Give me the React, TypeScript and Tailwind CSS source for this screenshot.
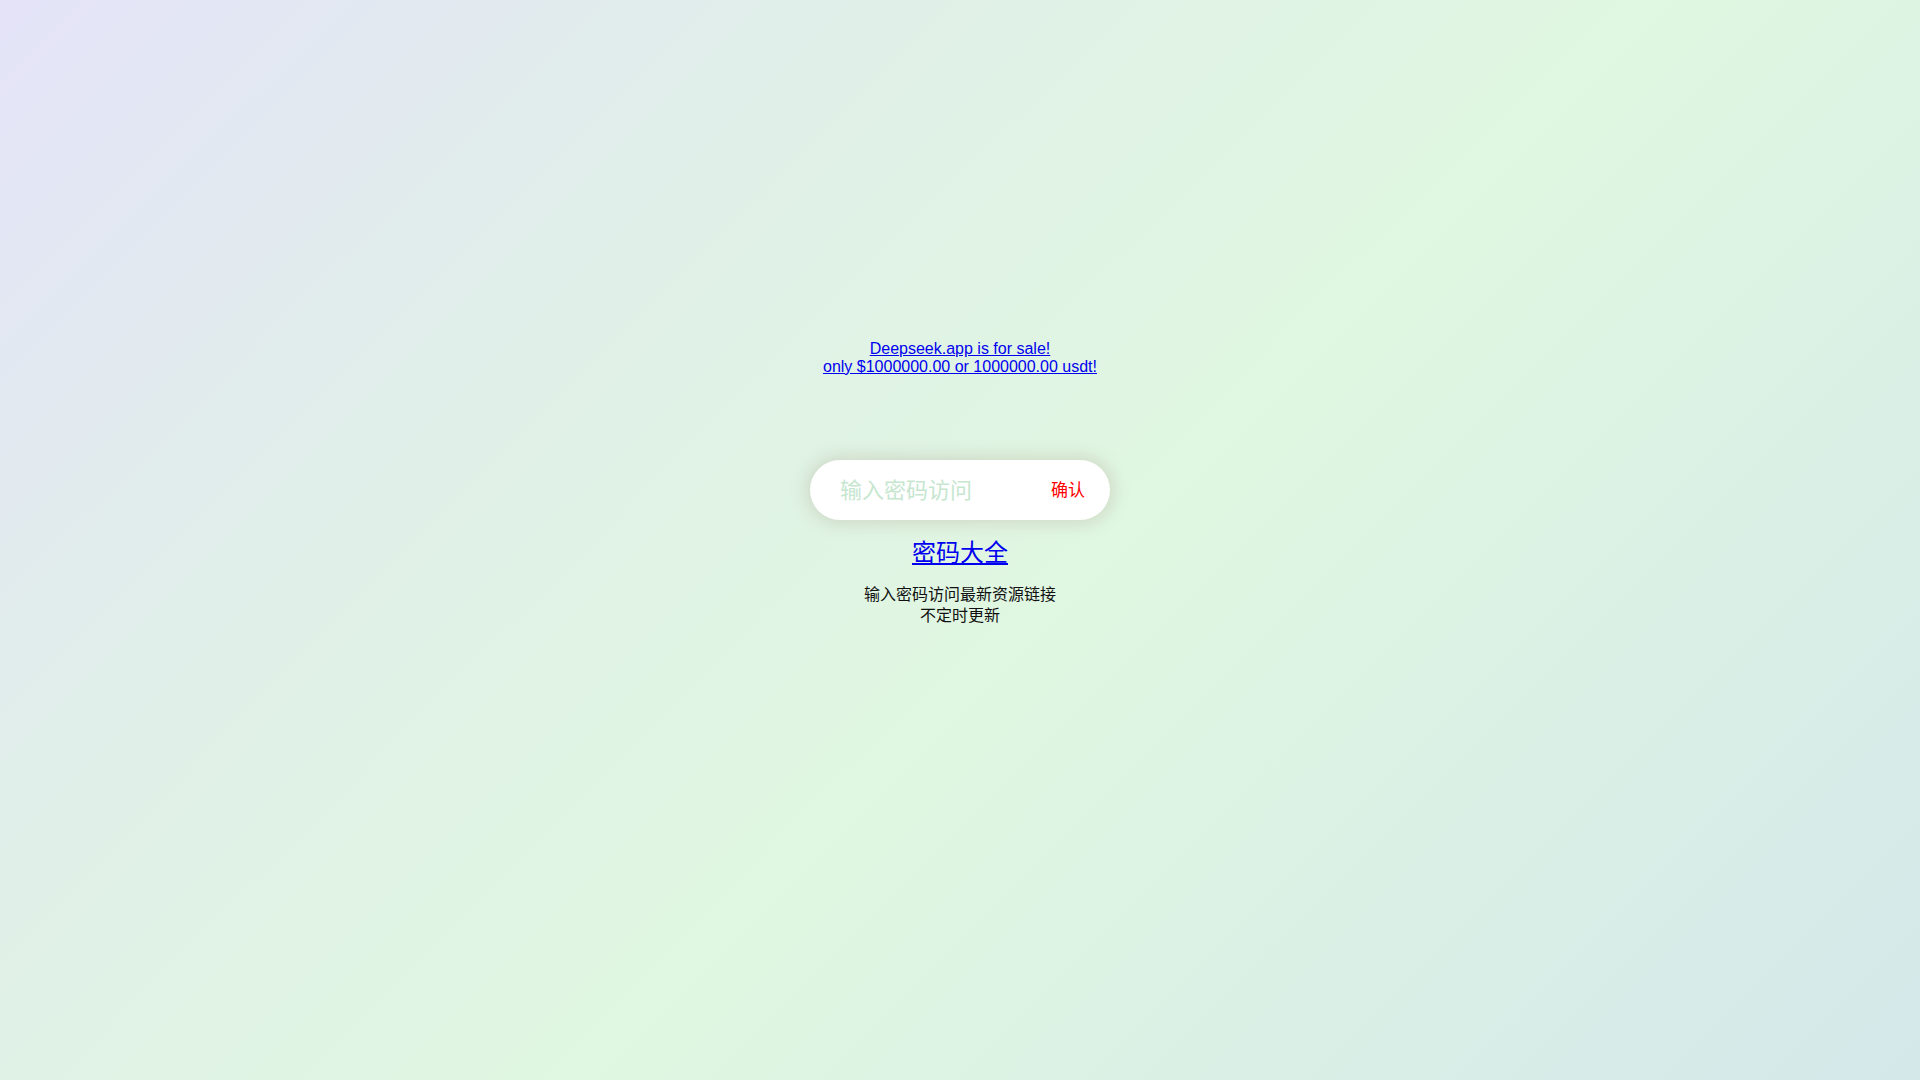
import React, { useState } from 'react';

const FONT = { fontFamily: '"Liberation Sans", Arial, "Noto Sans CJK SC", sans-serif' };

export default function App() {
  const [pwd, setPwd] = useState('');

  return (
    <div
      className="min-h-screen w-full bg-[linear-gradient(135deg,#e4e3f8_0%,#e0f0e8_30%,#e0f7e1_55%,#d4e8ea_100%)] text-black"
      style={FONT}
    >
      <div className="flex flex-col items-center pt-[340px]">
        {/* sale notice */}
        <a href="#" className="text-center text-[16px] leading-[18px] text-[#0000ee] underline">
          Deepseek.app is for sale!
          <br />
          only $1000000.00 or 1000000.00 usdt!
        </a>

        {/* password box */}
        <div className="mt-[84px] flex h-[60px] w-[300px] items-center rounded-full bg-white pl-[30px] pr-[25px] shadow-[0_0_16px_4px_rgba(160,140,120,0.25)]">
          <input
            type="password"
            value={pwd}
            onChange={(e) => setPwd(e.target.value)}
            placeholder="输入密码访问"
            className="min-w-0 flex-1 bg-transparent text-[22px] outline-none placeholder:text-[#c6e6cf]"
            style={FONT}
          />
          <button className="pt-[2px] text-[17px] text-[#ff0000]" style={FONT}>
            确认
          </button>
        </div>

        <a href="#" className="mt-[19px] text-[24px] leading-[28px] text-[#0000ee] underline">
          密码大全
        </a>

        <p className="mt-[17px] text-center text-[16px] leading-[21px] text-[#111]">
          输入密码访问最新资源链接
          <br />
          不定时更新
        </p>
      </div>
    </div>
  );
}
